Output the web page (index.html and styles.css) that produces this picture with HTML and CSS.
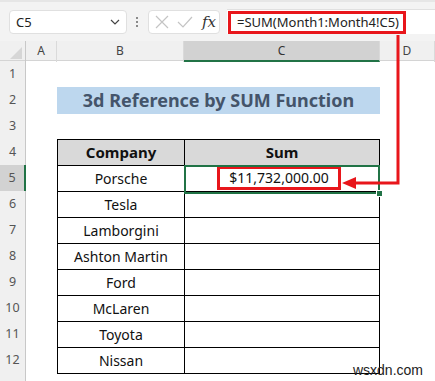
FILE: index.html
```html
<!DOCTYPE html>
<html lang="en">
<head>
    <meta charset="UTF-8">
    <title>3d Reference by SUM Function</title>
    <link rel="stylesheet" href="styles.css">
</head>
<body>
    <div class="toolbar">
        <div class="name-box">
            <span>C5</span>
            <svg class="chevron" width="10" height="6" viewBox="0 0 10 6"><path d="M1 1 L5 5 L9 1" fill="none" stroke="#444" stroke-width="1.2"/></svg>
        </div>
        <div class="dots"><i></i><i></i><i></i></div>
        <div class="fx-box">
            <svg width="14" height="14" viewBox="0 0 14 14"><path d="M1 1 L13 13 M13 1 L1 13" stroke="#c4c4c4" stroke-width="1.2"/></svg>
            <svg width="16" height="12" viewBox="0 0 16 12"><path d="M1 6 L6 11 L15 1" fill="none" stroke="#c4c4c4" stroke-width="1.2"/></svg>
            <span class="fx">fx</span>
        </div>
        <div class="formula-bar">
            <span class="formula">=SUM(Month1:Month4!C5)</span>
        </div>
    </div>

    <div class="sheet">
        <div class="row col-heads">
            <div class="corner"><svg width="12" height="12" viewBox="0 0 12 12"><path d="M12 0 L12 12 L0 12 Z" fill="#d6d6d6"/></svg></div>
            <div class="ch">A</div>
            <div class="ch">B</div>
            <div class="ch active">C</div>
            <div class="ch">D</div>
        </div>
        <div class="row"><div class="rn">1</div></div>
        <div class="row"><div class="rn">2</div><div></div><div class="title">3d Reference by SUM Function</div></div>
        <div class="row"><div class="rn">3</div></div>
        <div class="row"><div class="rn">4</div><div></div><div class="cell b head">Company</div><div class="cell c head">Sum</div></div>
        <div class="row"><div class="rn active">5</div><div></div><div class="cell b">Porsche</div>
            <div class="cell c selected"><span class="value">$11,732,000.00</span><span class="sel-box"></span><span class="handle"></span></div></div>
        <div class="row"><div class="rn">6</div><div></div><div class="cell b">Tesla</div><div class="cell c"></div></div>
        <div class="row"><div class="rn">7</div><div></div><div class="cell b">Lamborgini</div><div class="cell c"></div></div>
        <div class="row"><div class="rn">8</div><div></div><div class="cell b">Ashton Martin</div><div class="cell c"></div></div>
        <div class="row"><div class="rn">9</div><div></div><div class="cell b">Ford</div><div class="cell c"></div></div>
        <div class="row"><div class="rn">10</div><div></div><div class="cell b">McLaren</div><div class="cell c"></div></div>
        <div class="row"><div class="rn">11</div><div></div><div class="cell b">Toyota</div><div class="cell c"></div></div>
        <div class="row last"><div class="rn">12</div><div></div><div class="cell b">Nissan</div><div class="cell c"></div></div>
        <div class="row"><div class="rn"></div></div>
    </div>

    <!-- red callout arrow from formula bar to C5 -->
    <svg class="arrow" width="435" height="381" viewBox="0 0 435 381">
        <path d="M398 35 L398 183 L354 183" fill="none" stroke="#e8161b" stroke-width="3"/>
        <path d="M342 183 L356 177 L356 189 Z" fill="#e8161b"/>
    </svg>

    <div class="watermark">wsxdn.com</div>
</body>
</html>
```

FILE: styles.css
```css
body {
    margin: 0;
    width: 435px;
    height: 381px;
    overflow: hidden;
    position: relative;
    font-family: "Noto Sans", "Liberation Sans", sans-serif;
    background-color: #ffffff;
}
.toolbar {
    display: flex;
    align-items: center;
    height: 41px;
    box-sizing: border-box;
    padding-left: 9px;
    background-color: #f3f3f3;
    border-top: 2px solid #e6e6e6;
}
.name-box {
    display: flex;
    align-items: center;
    justify-content: space-between;
    width: 118px;
    height: 24px;
    box-sizing: border-box;
    padding: 0 6px 0 6px;
    background-color: #ffffff;
    border: 1px solid #e0e0e0;
    border-radius: 4px;
    font-size: 13px;
    color: #222;
}
.dots {
    display: flex;
    flex-direction: column;
    gap: 2px;
    margin: 0 10px 0 9px;
}
.dots i {
    width: 2px;
    height: 2px;
    background-color: #8a8a8a;
}
.fx-box {
    display: flex;
    align-items: center;
    gap: 8px;
    width: 72px;
    height: 24px;
    box-sizing: border-box;
    padding-left: 6px;
    background-color: #ffffff;
    border: 1px solid #e0e0e0;
    border-radius: 4px;
}
.fx {
    font-family: "DejaVu Serif", "Liberation Serif", serif;
    font-style: italic;
    font-size: 15px;
    color: #333;
    margin-left: 1px;
}
.formula-bar {
    flex: 1;
    height: 24px;
    margin-left: 7px;
    background-color: #ffffff;
    border-top: 1px solid #e0e0e0;
    position: relative;
}
.formula {
    position: absolute;
    left: 1px;
    top: 1px;
    width: 178px;
    height: 23px;
    box-sizing: border-box;
    border: 3px solid #e8161b;
    padding-left: 6px;
    font-size: 13px;
    line-height: 17px;
    color: #222;
    background-color: #ffffff;
}
.row {
    display: grid;
    grid-template-columns: 26px 31px 127px 196px 1fr;
    height: 26px;
}
.col-heads {
    height: 20px;
    background-color: #f0f0f0;
    border-bottom: 1px solid #d4d4d4;
    box-sizing: border-box;
}
.corner {
    display: flex;
    align-items: flex-end;
    justify-content: flex-end;
    padding: 0 3px 3px 0;
    border-right: 1px solid #c8c8c8;
}
.ch {
    text-align: center;
    font-size: 12px;
    line-height: 19px;
    color: #444;
    border-right: 1px solid #dadada;
}
.ch.active {
    background-color: #d2d2d2;
    border-bottom: 2px solid #217346;
    color: #333;
}
.rn {
    text-align: center;
    font-size: 12.5px;
    line-height: 26px;
    color: #555;
    background-color: #f0f0f0;
    border-right: 1px solid #c8c8c8;
    border-bottom: 1px solid #dadada;
    box-sizing: border-box;
}
.rn.active {
    background-color: #d2d2d2;
    border-right: 2px solid #217346;
}
.title {
    grid-column: 3 / 5;
    background-color: #bdd7ee;
    color: #44546a;
    font-weight: bold;
    font-size: 18px;
    line-height: 26px;
    text-align: center;
}
.cell {
    border-top: 1px solid #000;
    border-left: 1px solid #000;
    font-size: 14px;
    line-height: 25px;
    text-align: center;
    color: #111;
}
.cell.c {
    border-right: 1px solid #000;
}
.head {
    background-color: #d9d9d9;
    font-weight: bold;
    font-size: 15px;
}
.last .cell {
    border-bottom: 1px solid #000;
}
.selected {
    position: relative;
}
.value {
    display: inline-block;
    border: 3px solid #e8161b;
    padding: 0 9px;
    line-height: 18px;
    margin-top: 0;
    margin-right: 6px;
    vertical-align: top;
}
.sel-box {
    position: absolute;
    left: -1px;
    top: -1px;
    right: -1px;
    bottom: -2px;
    border: 2px solid #217346;
}
.handle {
    position: absolute;
    right: -4px;
    bottom: -5px;
    width: 5px;
    height: 5px;
    background-color: #217346;
    border: 1px solid #ffffff;
}
.arrow {
    position: absolute;
    left: 0;
    top: 0;
    pointer-events: none;
}
.watermark {
    position: absolute;
    right: 12px;
    bottom: 3px;
    font-family: "Liberation Sans", sans-serif;
    font-size: 14px;
    color: #222;
}
```
